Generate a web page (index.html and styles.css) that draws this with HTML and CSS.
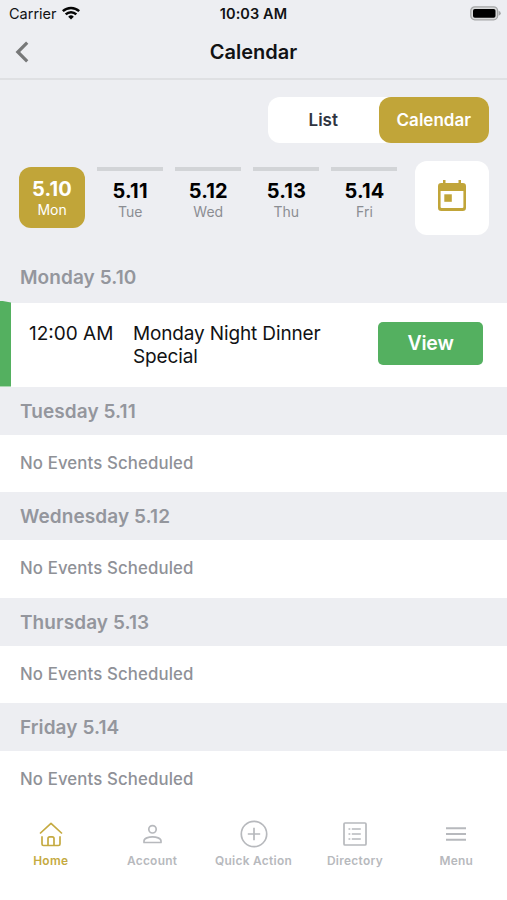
FILE: index.html
```html
<!DOCTYPE html>
<html lang="en">
  <head>
    <meta charset="UTF-8" />
    <meta name="viewport" content="width=device-width, initial-scale=1.0" />
    <title>Calendar</title>
    <link rel="stylesheet" href="styles.css">
  </head>
  <body>
    <div class="status-bar">
      <div class="carrier">
        <span>Carrier</span>
        <svg width="18" height="14" viewBox="0 0 18 14" fill="none" stroke="#050505" stroke-width="2.5">
          <path d="M0.8 5.2a11.8 11.8 0 0 1 16.4 0" />
          <path d="M3.7 8.3a7.6 7.6 0 0 1 10.6 0" />
          <path d="M9 13.6l-2.8-2.9a4 4 0 0 1 5.6 0z" fill="#050505" stroke="none" />
        </svg>
      </div>
      <span class="time">10:03 AM</span>
      <div class="battery">
        <svg width="31" height="15" viewBox="0 0 31 15">
          <rect x="0.8" y="0.8" width="26.8" height="13" rx="4" fill="#d9dadb" stroke="#a5a6a7" stroke-width="1.3" />
          <rect x="3" y="3" width="22.5" height="8.8" rx="1.8" fill="#000" />
          <path d="M28.6 4.8q2.2 .9 2.2 2.5t-2.2 2.5z" fill="#a5a6a7" />
        </svg>
      </div>
    </div>

    <header class="header">
      <button class="back" aria-label="Back">
        <svg width="14" height="22" viewBox="0 0 14 22" fill="none" stroke="#777879" stroke-width="3.2">
          <path d="M12.2 1.6L2.8 11l9.4 9.4" />
        </svg>
      </button>
      <h1>Calendar</h1>
    </header>

    <main>
      <div class="toggle">
        <button class="toggle-item">List</button>
        <button class="toggle-item active">Calendar</button>
      </div>

      <div class="week">
        <div class="day selected"><b>5.10</b><span>Mon</span></div>
        <div class="day"><b>5.11</b><span>Tue</span></div>
        <div class="day"><b>5.12</b><span>Wed</span></div>
        <div class="day"><b>5.13</b><span>Thu</span></div>
        <div class="day"><b>5.14</b><span>Fri</span></div>
        <button class="pick-date" aria-label="Pick a date">
          <svg width="28" height="32" viewBox="0 0 28 32" fill="#c1a539">
            <path fill-rule="evenodd" d="M5 0h2.500v3h13V0H23v3h1.700a3.300 3.300 0 0 1 3.300 3.300v21.400a3.300 3.300 0 0 1-3.300 3.300H3.300A3.300 3.300 0 0 1 0 27.700V6.300A3.300 3.300 0 0 1 3.300 3H5zM2.600 11v16a1 1 0 0 0 1 1h20.800a1 1 0 0 0 1-1V11z" />
            <rect x="6.300" y="14.300" width="7.500" height="7.500" />
          </svg>
        </button>
      </div>

      <h2 class="date-heading first">Monday 5.10</h2>
      <div class="event">
        <span class="event-time">12:00 AM</span>
        <span class="event-name">Monday Night Dinner Special</span>
        <button class="view">View</button>
      </div>

      <h2 class="date-heading">Tuesday 5.11</h2>
      <p class="empty">No Events Scheduled</p>
      <h2 class="date-heading">Wednesday 5.12</h2>
      <p class="empty">No Events Scheduled</p>
      <h2 class="date-heading">Thursday 5.13</h2>
      <p class="empty">No Events Scheduled</p>
      <h2 class="date-heading">Friday 5.14</h2>
      <p class="empty">No Events Scheduled</p>
    </main>

    <nav class="tabs">
      <a class="tab current">
        <svg width="28" height="28" viewBox="0 0 28 28">
          <path d="M3 13.500L14 3.300l11 10.200M5 16.300v7.700q0 1.500 1.500 1.500h15q1.500 0 1.500-1.500v-7.700M11 25v-6.500q0-1.700 1.700-1.700h2.600q1.700 0 1.700 1.700V25" />
        </svg>
        <span>Home</span>
      </a>
      <a class="tab">
        <svg width="28" height="28" viewBox="0 0 28 28">
          <circle cx="14.500" cy="9.300" r="3.700" />
          <path d="M6 22.500v-1.400c0-2.800 4.700-4.300 8.500-4.300s8.500 1.500 8.500 4.300v1.400z" />
        </svg>
        <span>Account</span>
      </a>
      <a class="tab">
        <svg width="28" height="28" viewBox="0 0 28 28">
          <circle cx="14" cy="14" r="12.700" />
          <path d="M14 7.800v12.400M7.800 14h12.400" />
        </svg>
        <span>Quick Action</span>
      </a>
      <a class="tab">
        <svg width="28" height="28" viewBox="0 0 28 28">
          <rect x="3" y="3" width="22" height="22" rx="1" />
          <path d="M10.800 9h9M10.800 14h9M10.800 19h9M7.500 9h1.800M7.500 14h1.800M7.500 19h1.800" />
        </svg>
        <span>Directory</span>
      </a>
      <a class="tab">
        <svg width="28" height="28" viewBox="0 0 28 28">
          <path d="M4 8.300h20M4 14h20M4 19.700h20" stroke-width="2" />
        </svg>
        <span>Menu</span>
      </a>
    </nav>
  </body>
</html>
```
FILE: styles.css
```css
* {
  box-sizing: border-box;
}

body {
  margin: 0;
  height: 900px;
  display: flex;
  flex-direction: column;
  overflow: hidden;
  font-family: Inter, "Liberation Sans", sans-serif;
  background-color: #fff;
  color: #111214;
}

button {
  border: 0;
  padding: 0;
  font-family: inherit;
  cursor: pointer;
}

svg {
  display: block;
}

.status-bar {
  display: grid;
  grid-template-columns: 1fr auto 1fr;
  align-items: center;
  height: 27px;
  padding: 0 6px 0 9px;
  background-color: #edeef2;
  font-size: 14.5px;
}

.carrier {
  display: flex;
  align-items: center;
  gap: 5px;
}

.time {
  margin-right: 3px;
  font-weight: 600;
  letter-spacing: 0.1px;
}

.battery {
  justify-self: end;
}

.header {
  display: grid;
  grid-template-columns: 60px 1fr 60px;
  align-items: center;
  height: 53px;
  border-bottom: 2px solid #dfe0e3;
  background-color: #edeef2;
}

.back {
  padding-left: 15px;
  background: none;
}

.header h1 {
  margin: 0;
  text-align: center;
  font-size: 20px;
  font-weight: 600;
}

main {
  flex: 1;
  background-color: #edeef2;
}

.toggle {
  display: flex;
  width: 221px;
  height: 46px;
  margin: 17px 18px 0 auto;
  border-radius: 12px;
  background-color: #fff;
}

.toggle-item {
  flex: 1;
  border-radius: 12px;
  background: none;
  font-size: 17px;
  font-weight: 600;
  color: #2f3440;
}

.toggle-item.active {
  background-color: #c1a539;
  color: #fff;
}

.week {
  display: flex;
  gap: 12px;
  height: 74px;
  margin: 18px 18px 0 19px;
}

.day {
  display: flex;
  flex-direction: column;
  align-items: center;
  width: 66.100px;
  height: 61px;
  margin-top: 6px;
  padding-top: 9px;
  border-top: 4px solid #d2d4d7;
  color: #8b8d92;
}

.day b {
  font-size: 20px;
  font-weight: 700;
  line-height: 22px;
  letter-spacing: 0.15px;
  color: #000;
}

.day span {
  font-size: 14px;
  line-height: 20px;
}

.day.selected {
  padding-top: 11px;
  border-top: 0;
  border-radius: 12px;
  background-color: #c1a539;
  color: #fff;
}

.day.selected b {
  color: #fff;
}

.pick-date {
  display: flex;
  align-items: center;
  justify-content: center;
  width: 74px;
  margin-left: auto;
  padding-bottom: 3px;
  border-radius: 12px;
  background-color: #fff;
}

.date-heading {
  height: 48px;
  margin: 0;
  padding-left: 20px;
  font-size: 19px;
  font-weight: 600;
  line-height: 49px;
  letter-spacing: 0.08px;
  color: #94969d;
}

.date-heading.first {
  height: 68px;
  line-height: 85px;
}

.event {
  display: flex;
  position: relative;
  height: 84px;
  padding: 19px 24px 0 29px;
  background-color: #fff;
  font-size: 19px;
  line-height: 23px;
}

/* colour flag, a bit taller than the row */
.event::before {
  content: "";
  position: absolute;
  left: 0;
  top: -2px;
  bottom: 0;
  width: 11px;
  background-color: #54b060;
  clip-path: polygon(0 0, 100% 2px, 100% 100%, 0 100%);
}

.event-time {
  width: 104px;
}

.event-name {
  width: 215px;
  letter-spacing: -0.14px;
}

.view {
  width: 105px;
  height: 43px;
  margin-left: auto;
  border-radius: 5px;
  background-color: #54b060;
  font-size: 19.500px;
  font-weight: 600;
  letter-spacing: -0.2px;
  color: #fff;
}

.empty {
  height: 57.500px;
  margin: 0;
  padding-left: 20px;
  background-color: #fff;
  font-size: 16.800px;
  font-weight: 500;
  line-height: 57px;
  letter-spacing: 0.12px;
  color: #8f9197;
}

.tabs {
  display: flex;
  height: 92px;
  padding-top: 12px;
  background-color: #fff;
}

.tab {
  display: flex;
  flex: 1;
  flex-direction: column;
  align-items: center;
  gap: 5px;
  margin-top: -1px;
  font-size: 11.900px;
  font-weight: 600;
  line-height: 16px;
  letter-spacing: 0.3px;
  color: #b7b9bd;
}

.tab svg {
  fill: none;
  stroke: currentColor;
  stroke-width: 1.700;
  stroke-linejoin: round;
}

.tab.current {
  color: #c5aa41;
}
```
